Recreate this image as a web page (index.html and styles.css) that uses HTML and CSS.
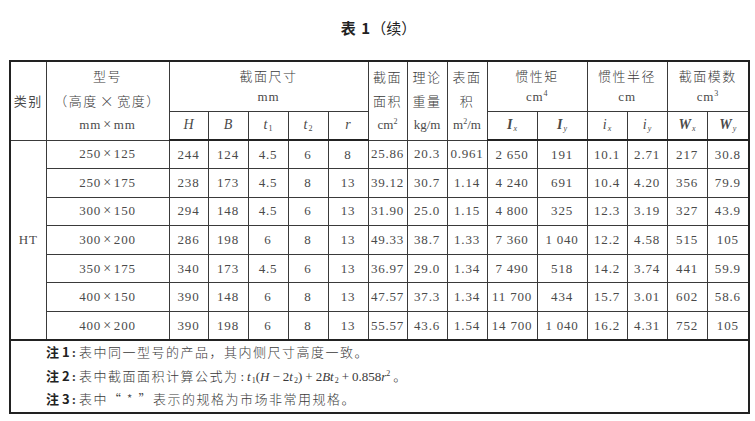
FILE: index.html
```html
<!DOCTYPE html>
<html lang="zh">
<head>
<meta charset="utf-8">
<title>表 1（续）</title>
<link rel="stylesheet" href="styles.css">
</head>
<body>
<div class="page">
  <div class="title"><span class="title-b">表 1</span><span class="title-r">（续）</span></div>
  <table class="spec">
    <colgroup>
      <col class="w36"><col class="w123">
      <col class="w39"><col class="w40"><col class="w40"><col class="w40"><col class="w40">
      <col class="w39"><col class="w40"><col class="w40">
      <col class="w50"><col class="w50">
      <col class="w40"><col class="w40">
      <col class="w40"><col class="w42">
    </colgroup>
    <thead>
      <tr class="h1">
        <th rowspan="2" class="zh">类别</th>
        <th rowspan="2" class="tri"><div class="zh">型号</div><div class="zh">（高度<span class="tm">×</span>宽度）</div><div class="num">mm<span class="tm">×</span>mm</div></th>
        <th colspan="5" class="duo"><div class="zh">截面尺寸</div><div class="num">mm</div></th>
        <th rowspan="2" class="tri"><div class="zh">截面</div><div class="zh">面积</div><div>cm<sup>2</sup></div></th>
        <th rowspan="2" class="tri"><div class="zh">理论</div><div class="zh">重量</div><div>kg/m</div></th>
        <th rowspan="2" class="tri"><div class="zh">表面</div><div class="zh">积</div><div>m<sup>2</sup>/m</div></th>
        <th colspan="2" class="duo"><div class="zh">惯性矩</div><div class="num">cm<sup>4</sup></div></th>
        <th colspan="2" class="duo"><div class="zh">惯性半径</div><div class="num">cm</div></th>
        <th colspan="2" class="duo"><div class="zh">截面模数</div><div class="num">cm<sup>3</sup></div></th>
      </tr>
      <tr class="h2">
        <th><i>H</i></th><th><i>B</i></th><th><i>t</i><sub>1</sub></th><th><i>t</i><sub>2</sub></th><th><i>r</i></th>
        <th><b><i>I</i></b><sub><i>x</i></sub></th><th><b><i>I</i></b><sub><i>y</i></sub></th>
        <th><i>i</i><sub><i>x</i></sub></th><th><i>i</i><sub><i>y</i></sub></th>
        <th><b><i>W</i></b><sub><i>x</i></sub></th><th><b><i>W</i></b><sub><i>y</i></sub></th>
      </tr>
    </thead>
    <tbody>
      <tr><td rowspan="7" class="cat">HT</td><td>250<span class="tm">×</span>125</td><td>244</td><td>124</td><td>4.5</td><td>6</td><td>8</td><td>25.86</td><td>20.3</td><td>0.961</td><td>2 650</td><td>191</td><td>10.1</td><td>2.71</td><td>217</td><td>30.8</td></tr>
      <tr><td>250<span class="tm">×</span>175</td><td>238</td><td>173</td><td>4.5</td><td>8</td><td>13</td><td>39.12</td><td>30.7</td><td>1.14</td><td>4 240</td><td>691</td><td>10.4</td><td>4.20</td><td>356</td><td>79.9</td></tr>
      <tr><td>300<span class="tm">×</span>150</td><td>294</td><td>148</td><td>4.5</td><td>6</td><td>13</td><td>31.90</td><td>25.0</td><td>1.15</td><td>4 800</td><td>325</td><td>12.3</td><td>3.19</td><td>327</td><td>43.9</td></tr>
      <tr><td>300<span class="tm">×</span>200</td><td>286</td><td>198</td><td>6</td><td>8</td><td>13</td><td>49.33</td><td>38.7</td><td>1.33</td><td>7 360</td><td>1 040</td><td>12.2</td><td>4.58</td><td>515</td><td>105</td></tr>
      <tr><td>350<span class="tm">×</span>175</td><td>340</td><td>173</td><td>4.5</td><td>6</td><td>13</td><td>36.97</td><td>29.0</td><td>1.34</td><td>7 490</td><td>518</td><td>14.2</td><td>3.74</td><td>441</td><td>59.9</td></tr>
      <tr><td>400<span class="tm">×</span>150</td><td>390</td><td>148</td><td>6</td><td>8</td><td>13</td><td>47.57</td><td>37.3</td><td>1.34</td><td>11 700</td><td>434</td><td>15.7</td><td>3.01</td><td>602</td><td>58.6</td></tr>
      <tr><td>400<span class="tm">×</span>200</td><td>390</td><td>198</td><td>6</td><td>8</td><td>13</td><td>55.57</td><td>43.6</td><td>1.54</td><td>14 700</td><td>1 040</td><td>16.2</td><td>4.31</td><td>752</td><td>105</td></tr>
    </tbody>
    <tfoot>
      <tr class="notes">
        <td colspan="16">
          <p class="note"><b class="nb">注 1</b><span class="colon">:</span><span class="zh">表中同一型号的产品，其内侧尺寸高度一致。</span></p>
          <p class="note"><b class="nb">注 2</b><span class="colon">:</span><span class="zh">表中截面面积计算公式为</span><span class="colon thin">:</span><i>t</i><sub>1</sub>(<i>H</i><span class="op">−</span>2<i>t</i><sub>2</sub>)<span class="op">+</span>2<i>Bt</i><sub>2</sub><span class="op">+</span>0.858<i>r</i><sup>2</sup><span class="zh end">。</span></p>
          <p class="note"><b class="nb">注 3</b><span class="colon">:</span><span class="zh">表中“ * ”表示的规格为市场非常用规格。</span></p>
        </td>
      </tr>
    </tfoot>
  </table>
</div>
</body>
</html>
```

FILE: styles.css
```css
html, body {
  margin: 0;
  padding: 0;
  background: #ffffff;
}
body {
  font-family: "Liberation Serif", "Noto Sans CJK SC", serif;
  color: #444444;
}
.page {
  padding: 0 7px 0 9px;
}
.title {
  height: 60px;
  line-height: 56px;
  text-align: center;
  font-size: 15px;
  color: #222222;
}
.title-b {
  font-family: "Noto Sans CJK SC", sans-serif;
  font-weight: 700;
  letter-spacing: 1px;
}
.title-r {
  font-family: "Noto Sans CJK SC", sans-serif;
  font-weight: 400;
}
.spec {
  border-collapse: collapse;
  table-layout: fixed;
  width: 739px;
  border: 2px solid #222222;
}
.w36 { width: 36px; }
.w123 { width: 123px; }
.w39 { width: 39px; }
.w40 { width: 40px; }
.w42 { width: 42px; }
.w50 { width: 50px; }
.spec th, .spec td {
  border: 1px solid #3a3a3a;
  padding: 0;
  text-align: center;
  vertical-align: middle;
  font-weight: normal;
  font-size: 13px;
  white-space: nowrap;
  color: #4a4a4a;
}
.spec td, .num {
  letter-spacing: 0.8px;
}
.zh {
  font-family: "Noto Sans CJK SC", sans-serif;
  font-weight: 300;
  letter-spacing: 1.5px;
  color: #3a3a3a;
}
.tm {
  display: inline-block;
  padding: 0 2px;
  font-size: 14px;
}
.h1 { height: 50px; }
.h2 { height: 29px; }
.h2 th {
  border-bottom: 2px solid #222222;
  font-size: 14px;
}
.tri div { line-height: 24px; }
.duo div { line-height: 21px; }
.spec sup {
  font-size: 8px;
  vertical-align: 5px;
  line-height: 0;
}
.spec sub {
  font-size: 8px;
  vertical-align: -2px;
  line-height: 0;
  margin-left: 1px;
}
.spec tbody tr { height: 28.6px; }
.spec tbody td { line-height: 16px; }
.notes td {
  border-top: 2px solid #222222;
  text-align: left;
  padding: 0 0 0 35px;
  height: 68px;
  letter-spacing: 0;
}
.note {
  margin: 0;
  line-height: 22.5px;
  font-size: 13px;
  color: #3a3a3a;
}
.nb {
  font-family: "Noto Sans CJK SC", sans-serif;
  font-weight: 700;
  color: #222222;
}
.colon {
  font-weight: 700;
  margin: 0 3px 0 2px;
}
.colon.thin {
  font-weight: 400;
}
.op {
  display: inline-block;
  padding: 0 3px;
}
.end {
  margin-left: 3px;
}
```
